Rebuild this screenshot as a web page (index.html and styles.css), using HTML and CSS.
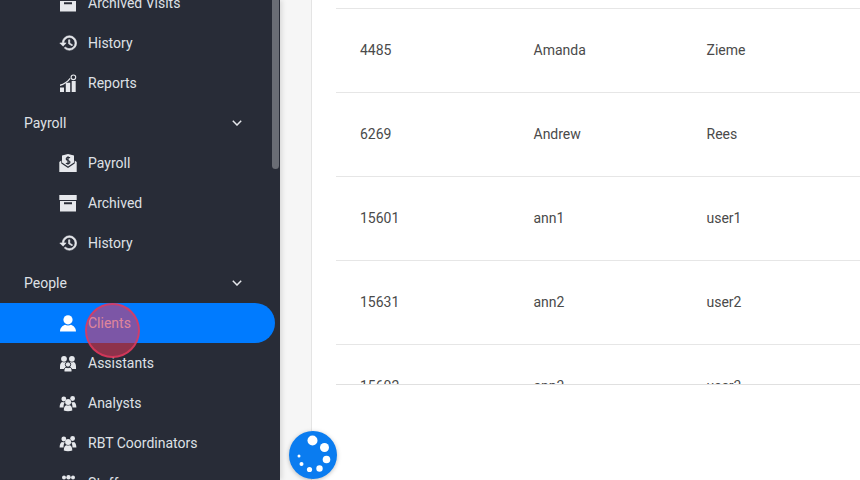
FILE: index.html
```html
<!DOCTYPE html>
<html lang="en">
<head>
    <meta charset="UTF-8">
    <meta name="viewport" content="width=device-width, initial-scale=1.0">
    <title>Clients</title>
    <link rel="stylesheet" href="styles.css">
</head>
<body>
    <svg class="icon-defs" width="0" height="0" aria-hidden="true">
        <symbol id="i-archive" viewBox="0 0 18 18">
            <path d="M.3 1h17.400v5H.3z"/>
            <path fill-rule="evenodd" d="M1 7h16v10.500H1zM5 8.300v2h8v-2z"/>
        </symbol>
        <symbol id="i-history" viewBox="0 .75 22.500 22.500">
            <path stroke="currentColor" stroke-width=".8" d="M13 3a9 9 0 0 0-9 9H1l3.890 3.890.07.14L9 12H6c0-3.870 3.130-7 7-7s7 3.130 7 7-3.130 7-7 7c-1.930 0-3.680-.79-4.940-2.060l-1.420 1.420A8.954 8.954 0 0 0 13 21a9 9 0 0 0 0-18zm-1 5v5l4.280 2.540.72-1.210-3.500-2.080V8H12z"/>
        </symbol>
        <symbol id="i-reports" viewBox="0 0 18 18">
            <path d="M1 13.500h4V18H1zM6.800 8.800h4.400V18H6.800zM12.700 7h4V18h-4z"/>
            <path d="M1 10.500c3.500-.8 7-3 9.700-6.500l.9.800C9 8.500 5 11 1 12z"/>
            <circle cx="14.400" cy="3.300" r="2.300" fill="none" stroke="currentColor" stroke-width="1.100"/>
        </symbol>
        <symbol id="i-payroll" viewBox="0 0 18 18">
            <path d="M3 1.500 9 0l6 1.500V8.500l-6 4-6-4z"/>
            <path d="M.3 8 2.300 6.500v3L9 14l6.700-4.500v-3l2 1.500v10H.3z"/>
            <path class="dollar" d="M11 3.800C10.300 3.200 7.200 3 7.200 4.900c0 2 3.800 1.200 3.800 3.200 0 1.900-3.200 1.700-4.100 1M9 2.200v8.600"/>
        </symbol>
        <symbol id="i-user" viewBox="0 0 18 18">
            <circle cx="9" cy="5.800" r="4.600"/>
            <path d="M1 17.500c0-3.500 2.500-5.800 5-6.700 1.500 1 4.500 1 6 0 2.500.9 5 3.200 5 6.700z"/>
        </symbol>
        <symbol id="i-team" viewBox="0 0 18 18">
            <circle cx="5" cy="4.800" r="2.900"/>
            <circle cx="12.900" cy="4.800" r="2.900"/>
            <path d="M1 15v-2.500c0-2.500 1-4.300 2.400-4.500.9.500 2.300.5 3.200 0 1 .1 1.900 1 2.400 2.200.5-1.200 1.400-2.100 2.400-2.200.9.500 2.300.500 3.200 0 1.400.2 2.400 2 2.400 4.500V15z"/>
            <circle class="cut" cx="9" cy="10.500" r="2.700"/>
            <path class="cut" d="M5 18v-1.500c0-1.800 1-3 2-3.200 1.200.5 2.800.5 4 0 1 .2 2 1.400 2 3.200V18z"/>
        </symbol>
        <symbol id="i-group" viewBox="0 0 18 18">
            <circle cx="4.800" cy="5" r="2.400"/>
            <circle cx="13.600" cy="4.500" r="2.400"/>
            <path d="M.6 13.500c0-3 1.100-5.200 2.500-5.500.9.400 1.900.4 2.800.1-.8 1.300-1.400 3-1.400 5.400z"/>
            <path d="M17.400 13.500c0-3-1.100-5.200-2.500-5.500-.9.400-1.900.4-2.800.1.800 1.300 1.400 3 1.400 5.400z"/>
            <circle cx="9.100" cy="8" r="3"/>
            <path d="M4.800 16.500c0-3.300 1.200-5 2.500-5.300 1.100.5 2.400.5 3.500 0 1.300.3 2.500 2 2.500 5.300-2.600 1-6 1-8.500 0z"/>
        </symbol>
        <symbol id="i-dots" viewBox="0 0 18 18">
            <circle cx="5" cy="3.500" r="2"/>
            <circle cx="9.500" cy="3.200" r="2.200"/>
            <circle cx="14" cy="3.500" r="2"/>
        </symbol>
    </svg>

    <div class="app">
        <aside class="sidebar">
            <nav class="menu">
                <a class="item"><svg class="icon"><use href="#i-archive"/></svg>Archived Visits</a>
                <a class="item"><svg class="icon"><use href="#i-history"/></svg>History</a>
                <a class="item"><svg class="icon"><use href="#i-reports"/></svg>Reports</a>

                <div class="section">
                    <span>Payroll</span>
                    <svg class="chevron" viewBox="0 0 10 6"><path d="M.8.8 5 5 9.200.8"/></svg>
                </div>
                <a class="item"><svg class="icon"><use href="#i-payroll"/></svg>Payroll</a>
                <a class="item"><svg class="icon"><use href="#i-archive"/></svg>Archived</a>
                <a class="item"><svg class="icon"><use href="#i-history"/></svg>History</a>

                <div class="section">
                    <span>People</span>
                    <svg class="chevron" viewBox="0 0 10 6"><path d="M.8.8 5 5 9.200.8"/></svg>
                </div>
                <a class="item active"><svg class="icon"><use href="#i-user"/></svg>Clients</a>
                <a class="item"><svg class="icon"><use href="#i-team"/></svg>Assistants</a>
                <a class="item"><svg class="icon"><use href="#i-group"/></svg>Analysts</a>
                <a class="item"><svg class="icon"><use href="#i-group"/></svg>RBT Coordinators</a>
                <a class="item"><svg class="icon"><use href="#i-dots"/></svg>Staff</a>
            </nav>
            <div class="scrollbar"></div>
        </aside>

        <main class="content">
            <div class="panel">
                <div class="table-wrap">
                    <div class="row"><span>4485</span><span>Amanda</span><span>Zieme</span></div>
                    <div class="row"><span>6269</span><span>Andrew</span><span>Rees</span></div>
                    <div class="row"><span>15601</span><span>ann1</span><span>user1</span></div>
                    <div class="row"><span>15631</span><span>ann2</span><span>user2</span></div>
                    <div class="row"><span>15602</span><span>ann3</span><span>user3</span></div>
                </div>
            </div>
        </main>
    </div>

    <div class="click-mark"></div>

    <svg class="loader" viewBox="0 0 48 48">
        <circle class="loader-bg" cx="24" cy="24" r="24"/>
        <circle cx="23.500" cy="9.500" r="5"/>
        <circle cx="35.500" cy="16.500" r="4.500"/>
        <circle cx="37.500" cy="28.500" r="3.800"/>
        <circle cx="30.500" cy="37.500" r="3.200"/>
        <circle cx="20.500" cy="38.500" r="2.600"/>
        <circle cx="12.500" cy="33" r="2"/>
        <circle cx="10" cy="25" r="1.500"/>
    </svg>
</body>
</html>
```

FILE: styles.css
```css
html, body {
    margin: 0;
    height: 100%;
    overflow: hidden;
}

body {
    font-family: 'Roboto', 'Liberation Sans', sans-serif;
    font-size: 14px;
    background-color: #f6f6f6;
}

.icon-defs {
    position: absolute;
}

.app {
    display: flex;
    height: 480px;
}

.sidebar {
    position: relative;
    flex: 0 0 280px;
    background-color: #282c37;
    box-shadow: 2px 0 5px rgba(0,0,0,0.12);
    overflow: hidden;
}

.menu {
    margin-top: -17px;
    padding-right: 5px;
}

.item, .section {
    display: flex;
    align-items: center;
    height: 40px;
    color: #dfe1e6;
}

.item {
    padding-left: 59px;
}

.item.active {
    background-color: #007bff;
    border-radius: 0 20px 20px 0;
}

.section {
    justify-content: space-between;
    padding: 0 33px 0 24px;
}

.icon {
    flex: none;
    width: 18px;
    height: 18px;
    margin-right: 11px;
    fill: #e6e8ec;
    color: #e6e8ec;
}

.dollar {
    fill: none;
    stroke: #282c37;
    stroke-width: 1.2;
}

.cut {
    stroke: #282c37;
    stroke-width: 1;
}

.item.active .icon {
    fill: #ffffff;
}

.chevron {
    width: 10px;
    height: 6px;
    fill: none;
    stroke: #e6e8ec;
    stroke-width: 1.5;
}

.scrollbar {
    position: absolute;
    top: 0;
    right: 1px;
    width: 7px;
    height: 169px;
    background-color: #6a6d75;
    border-radius: 0 0 4px 4px;
}

.content {
    flex: 1;
    padding-left: 31px;
    min-width: 0;
}

.panel {
    height: 100%;
    box-sizing: border-box;
    padding: 8px 0 0 24px;
    background-color: #ffffff;
    border-left: 1px solid #e4e4e4;
}

.table-wrap {
    height: 375px;
    overflow: hidden;
    border-top: 1px solid #e6e6e6;
    border-bottom: 1px solid #e0e0e0;
}

.row {
    display: grid;
    grid-template-columns: 173.5px 173px 1fr;
    align-items: center;
    box-sizing: border-box;
    height: 84px;
    padding: 0 0 1px 24px;
    border-bottom: 1px solid #e6e6e6;
    color: #4a4a4a;
}

.click-mark {
    position: absolute;
    left: 85px;
    top: 303px;
    width: 51px;
    height: 51px;
    border: 2px solid rgba(226,56,92,0.8);
    border-radius: 50%;
    background-color: rgba(226,56,92,0.55);
}

.loader {
    position: absolute;
    left: 289px;
    top: 431px;
    width: 48px;
    height: 48px;
    fill: #ffffff;
    filter: drop-shadow(0 1px 2px rgba(0,0,0,0.25));
}

.loader-bg {
    fill: #0a7cf0;
}
```
